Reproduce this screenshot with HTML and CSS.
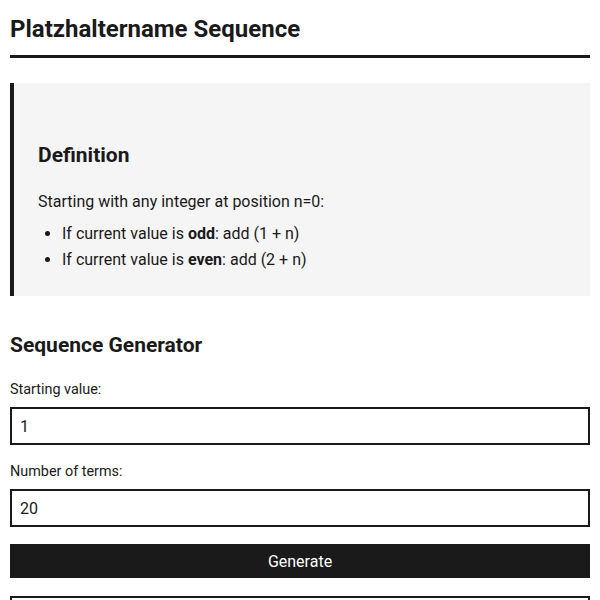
FILE: index.html
```html
<!DOCTYPE html>
<html>
<head>
    <meta charset="utf-8">
    <title>Platzhaltername Sequence</title>
    <link rel="stylesheet" href="styles.css">
</head>
<body>
    <h1 class="page-title">Platzhaltername Sequence</h1>

    <section class="definition">
        <h2>Definition</h2>
        <p>Starting with any integer at position n=0:</p>
        <ul>
            <li>If current value is <strong>odd</strong>: add (1 + n)</li>
            <li>If current value is <strong>even</strong>: add (2 + n)</li>
        </ul>
    </section>

    <section class="generator">
        <h2>Sequence Generator</h2>
        <label for="start">Starting value:</label>
        <input id="start" type="number" value="1">
        <label for="terms">Number of terms:</label>
        <input id="terms" type="number" value="20">
        <button onclick="generate()">Generate</button>
        <div id="output" class="output"></div>
    </section>

    <script>
        function generate() {
            let value = parseInt(document.getElementById('start').value, 10) || 0;
            let count = parseInt(document.getElementById('terms').value, 10) || 0;
            let terms = [];

            for (let n = 0; n < count; n++) {
                terms.push(value);
                // odd: +(1+n), even: +(2+n)
                value += (Math.abs(value) % 2 === 1) ? (1 + n) : (2 + n);
            }

            document.getElementById('output').textContent = terms.join(', ');
        }
    </script>
</body>
</html>
```

FILE: styles.css
```css
/* 기본 스타일 */
body {
    font-family: Roboto, "Liberation Sans", Arial, sans-serif;
    color: #1a1a1a;
    background-color: #ffffff;
    margin: 0;
    padding: 0 10px;
}

/* 제목 */
.page-title {
    font-size: 24px;
    line-height: 28px;
    margin: 0 0 25px;
    padding: 15px 0 12px;
    border-bottom: 3px solid #1a1a1a;
}

h2 {
    font-size: 21px;
    line-height: 24px;
    margin: 0;
}

/* 정의 박스 */
.definition {
    background-color: #f5f5f5;
    border-left: 4px solid #1a1a1a;
    padding: 24px 24px 23px;
}
.definition h2 {
    margin: 36px 0 22px;
}
.definition p {
    font-size: 16px;
    line-height: 26px;
    margin: 0 0 6px;
}
.definition ul {
    font-size: 16px;
    line-height: 26px;
    margin: 0;
    padding-left: 24px;
}

/* 생성기 */
.generator {
    margin-top: 37px;
}
.generator h2 {
    margin-bottom: 24px;
}
label {
    display: block;
    font-size: 14.4px;
    line-height: 18px;
    margin-bottom: 8px;
}
input {
    display: block;
    box-sizing: border-box;
    width: 100%;
    font-family: inherit;
    font-size: 16px;
    line-height: 18px;
    color: #1a1a1a;
    padding: 9px 8px 7px;
    border: 2px solid #1a1a1a;
    border-radius: 0;
    margin: 0 0 18px;
    background: #fff;
}
input::-webkit-outer-spin-button,
input::-webkit-inner-spin-button {
    -webkit-appearance: none;
    margin: 0;
}
input[type=number] {
    -moz-appearance: textfield;
}
button {
    display: block;
    width: 100%;
    margin-top: -1px;
    padding: 9px 8px 7px;
    font-family: inherit;
    font-size: 16px;
    line-height: 18px;
    color: #fff;
    background-color: #1a1a1a;
    border: none;
    border-radius: 0;
    cursor: pointer;
}

/* 결과 */
.output {
    margin-top: 18px;
    min-height: 40px;
    border: 2px solid #1a1a1a;
    padding: 10px;
    font-size: 14px;
}
```
